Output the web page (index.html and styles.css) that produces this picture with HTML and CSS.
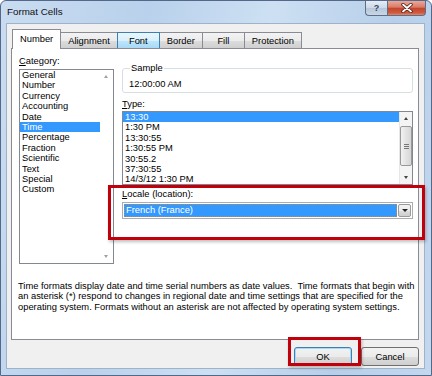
FILE: index.html
```html
<!DOCTYPE html>
<html>
<head>
<meta charset="utf-8">
<link rel="stylesheet" href="styles.css">
</head>
<body>
<div class="window">
  <div class="titlebar">
    <span class="title">Format Cells</span>
    <div class="caption-btns">
      <div class="cbtn help">?</div>
      <div class="cbtn close">
        <svg width="12" height="10" viewBox="0 0 12 10"><path d="M2 1.5 L10 8.5 M10 1.5 L2 8.5" stroke="#4a1a12" stroke-width="3.4" stroke-linecap="round"/><path d="M2 1.5 L10 8.5 M10 1.5 L2 8.5" stroke="#fff" stroke-width="1.8" stroke-linecap="round"/></svg>
      </div>
    </div>
  </div>
  <div class="client">
    <div class="tabs">
      <div class="tab active">Number</div>
      <div class="tab">Alignment</div>
      <div class="tab hover">Font</div>
      <div class="tab">Border</div>
      <div class="tab">Fill</div>
      <div class="tab">Protection</div>
    </div>
    <div class="panel">
      <div class="cols">
        <div class="left">
          <div class="label"><u>C</u>ategory:</div>
          <div class="listbox cat">
            <div class="items">
              <div class="item">General</div>
              <div class="item">Number</div>
              <div class="item">Currency</div>
              <div class="item">Accounting</div>
              <div class="item">Date</div>
              <div class="item sel">Time</div>
              <div class="item">Percentage</div>
              <div class="item">Fraction</div>
              <div class="item">Scientific</div>
              <div class="item">Text</div>
              <div class="item">Special</div>
              <div class="item">Custom</div>
            </div>
            <div class="vscroll disabled">
              <div class="arrow up"></div>
              <div class="track"></div>
              <div class="arrow down"></div>
            </div>
          </div>
        </div>
        <div class="right">
          <fieldset class="sample"><legend>Sample</legend><div class="sample-val">12:00:00 AM</div></fieldset>
          <div class="label"><u>T</u>ype:</div>
          <div class="listbox type">
            <div class="items">
              <div class="item sel">13:30</div>
              <div class="item">1:30 PM</div>
              <div class="item">13:30:55</div>
              <div class="item">1:30:55 PM</div>
              <div class="item">30:55.2</div>
              <div class="item">37:30:55</div>
              <div class="item">14/3/12 1:30 PM</div>
            </div>
            <div class="vscroll">
              <div class="arrow up"></div>
              <div class="track"><div class="thumb"><span class="grip"></span></div></div>
              <div class="arrow down"></div>
            </div>
          </div>
          <div class="label locale-label"><u>L</u>ocale (location):</div>
          <div class="combo">
            <div class="combo-val">French (France)</div>
            <div class="combo-btn"><span class="tri"></span></div>
          </div>
        </div>
      </div>
      <p class="desc">Time formats display date and time serial numbers as date values.&nbsp; Time formats that begin with<br>an asterisk (*) respond to changes in regional date and time settings that are specified for the<br>operating system. Formats without an asterisk are not affected by operating system settings.</p>
    </div>
    <div class="buttons">
      <div class="btn default">OK</div>
      <div class="btn">Cancel</div>
    </div>
  </div>
  <div class="hl hl-locale"></div>
  <div class="hl hl-ok"></div>
</div>
</body>
</html>
```
FILE: styles.css
```css
* { box-sizing: border-box; }
html, body { margin: 0; padding: 0; }
body {
  width: 432px;
  height: 376px;
  overflow: hidden;
  background: #fff;
  font-family: "Liberation Sans", Arial, sans-serif;
  font-size: 9.35px;
  color: #000;
}
.window {
  position: relative;
  width: 432px;
  height: 376px;
  border: 1px solid #54698a;
  border-radius: 6px 6px 0 0;
  background: linear-gradient(100deg, #c9dcf1 0%, #b9d1ec 30%, #cde0f3 55%, #b7cfea 80%, #c3d8ef 100%);
  display: flex;
  flex-direction: column;
}
.titlebar {
  height: 22px;
  display: flex;
  align-items: flex-start;
  justify-content: space-between;
  padding-left: 6px;
}
.title {
  font-size: 9.8px;
  margin-top: 5px;
  color: #111;
}
.caption-btns {
  display: flex;
  margin-right: 5px;
}
.cbtn {
  height: 15px;
  border: 1px solid #5d6f86;
  border-top: none;
  display: flex;
  align-items: center;
  justify-content: center;
}
.help {
  width: 22px;
  border-radius: 0 0 0 4px;
  border-right: none;
  background: linear-gradient(#e4ecf6 0%, #cdd9e8 50%, #b6c6da 51%, #c9d6e5 100%);
  color: #34445a;
  font-size: 9px;
  font-weight: bold;
}
.close {
  width: 39px;
  border-radius: 0 0 4px 0;
  background: linear-gradient(#e9a99b 0%, #d97a66 45%, #c3442b 50%, #d05a3e 85%, #e08a6c 100%);
}
.client {
  flex: 1;
  margin: 0 6px 6px 5px;
  border: 1px solid #9fb2c8;
  background: #f0f0f0;
  padding: 4px 5px 0 4px;
  display: flex;
  flex-direction: column;
}
.tabs {
  display: flex;
  align-items: flex-end;
  height: 20px;
  padding-left: 1px;
  position: relative;
  z-index: 2;
}
.tab {
  height: 16px;
  min-width: 43px;
  border: 1px solid #898c95;
  border-bottom: none;
  margin-right: -1px;
  padding: 0 7px;
  display: flex;
  align-items: center;
  justify-content: center;
  background: linear-gradient(#f3f3f3 0%, #ebebeb 50%, #dddddd 51%, #cfcfcf 100%);
  color: #000;
}
.tab.hover {
  background: linear-gradient(#eaf6fd 0%, #d9f0fc 50%, #bee6fd 51%, #a7d9f5 100%);
  border-color: #3c7fb1;
  position: relative;
  z-index: 1;
}
.tab.active {
  height: 20px;
  margin-bottom: -1px;
  background: #fff;
  padding: 0 7px 2px;
  position: relative;
  z-index: 2;
}
.panel {
  background: #fff;
  border: 1px solid #898c95;
  height: 292px;
  padding: 6px 4px 0 6px;
  position: relative;
  z-index: 1;
}
.cols {
  display: flex;
  gap: 8px;
}
.label {
  height: 12px;
  line-height: 12px;
  color: #000;
}
.label u { text-decoration: underline; }
.left {
  width: 96px;
  padding-left: 1px;
}
.listbox {
  border: 1px solid #828790;
  background: #fff;
  display: flex;
  overflow: hidden;
}
.listbox .items {
  flex: 1;
  overflow: hidden;
}
.item {
  height: 10.4px;
  line-height: 10.4px;
  padding-left: 2px;
  white-space: nowrap;
}
.item.sel {
  background: #3399ff;
  color: #fff;
}
.cat {
  margin-top: 2px;
  height: 195px;
}
.vscroll {
  width: 13px;
  display: flex;
  flex-direction: column;
  background: #f4f4f4;
  border-left: 1px solid #e6e6e6;
}
.vscroll.disabled {
  background: #fff;
  border-left: none;
}
.arrow {
  height: 13px;
  position: relative;
}
.arrow::after {
  content: "";
  position: absolute;
  left: 4px;
  border-left: 2.5px solid transparent;
  border-right: 2.5px solid transparent;
}
.arrow.up::after {
  top: 5px;
  border-bottom: 3px solid #444;
}
.arrow.down::after {
  top: 5px;
  border-top: 3px solid #444;
}
.disabled .arrow.up::after { border-bottom-color: #a0a0a0; }
.disabled .arrow.down::after { border-top-color: #a0a0a0; }
.track {
  flex: 1;
  position: relative;
}
.thumb {
  margin-top: 1px;
  height: 40px;
  border: 1px solid #999;
  border-radius: 2px;
  background: linear-gradient(90deg, #f2f2f2, #e3e3e3 50%, #d6d6d6);
  display: flex;
  align-items: center;
  justify-content: center;
}
.grip {
  width: 5px;
  height: 5px;
  border-top: 1px solid #777;
  border-bottom: 1px solid #777;
  position: relative;
}
.grip::after {
  content: "";
  position: absolute;
  left: 0; right: 0; top: 1px;
  border-top: 1px solid #777;
}
.right {
  width: 291px;
}
.sample {
  margin: 7px 0 0 0;
  padding: 0 6px;
  height: 31px;
  border: 1px solid #d5dfe5;
  border-radius: 3px;
}
.sample legend {
  padding: 0 1px;
  margin-left: 1px;
  line-height: 12px;
}
.sample-val {
  line-height: 12px;
  margin-top: 4px;
}
.sample + .label { margin-top: 5px; }
.type {
  margin-top: 1px;
  height: 74px;
}
.locale-label { margin-top: 3px; }
.combo {
  margin-top: 2px;
  height: 17px;
  border: 1px solid #abadb3;
  background: #fff;
  display: flex;
  padding: 1px;
}
.combo-val {
  flex: 1;
  background: #3399ff;
  color: #fff;
  line-height: 13px;
  padding-left: 2px;
  outline: 1px dotted #b5895a;
  outline-offset: -1px;
}
.combo-btn {
  width: 13px;
  margin-left: 1px;
  border: 1px solid #9a9a9a;
  border-radius: 2px;
  background: linear-gradient(#f2f2f2 0%, #ebebeb 50%, #dddddd 51%, #cfcfcf 100%);
  display: flex;
  align-items: center;
  justify-content: center;
}
.tri {
  border-left: 3px solid transparent;
  border-right: 3px solid transparent;
  border-top: 3px solid #222;
}
.desc {
  margin: 17px 0 0 0;
  line-height: 10.4px;
  white-space: nowrap;
}
.buttons {
  display: flex;
  justify-content: flex-end;
  gap: 9px;
  margin-top: 7px;
}
.btn {
  width: 58px;
  height: 19px;
  border: 1px solid #707070;
  border-radius: 3px;
  background: linear-gradient(#f2f2f2 0%, #ebebeb 50%, #dddddd 51%, #cfcfcf 100%);
  display: flex;
  align-items: center;
  justify-content: center;
}
.btn.default {
  border-color: #3c7fb1;
  box-shadow: inset 0 0 0 1px #a6d8f7;
}
.hl {
  position: absolute;
  z-index: 10;
  border: 3px solid #c0000b;
  box-shadow: 1px 2px 3px rgba(0,0,0,0.25);
}
.hl-locale {
  left: 107px;
  top: 184px;
  width: 317px;
  height: 55px;
}
.hl-ok {
  left: 287px;
  top: 336px;
  width: 73px;
  height: 29px;
}
```
